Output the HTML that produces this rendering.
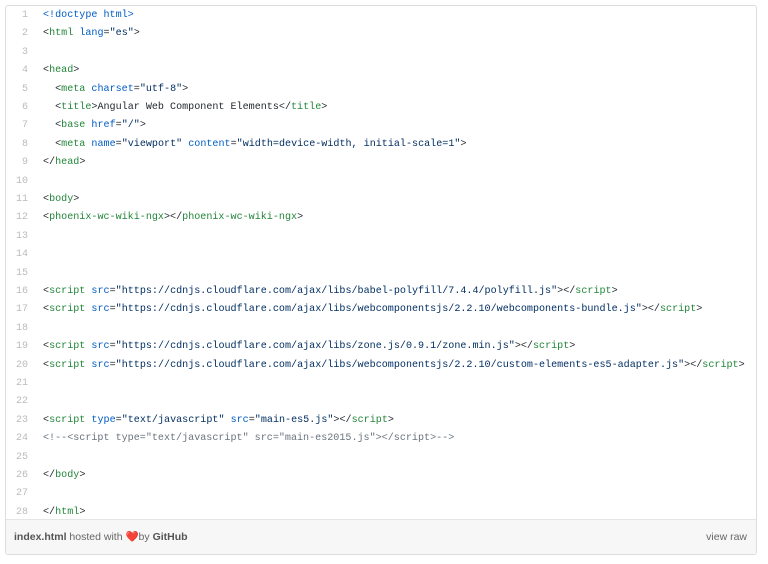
<!DOCTYPE html>
<html><head><style>
body{margin:0;background:#fff;width:768px;height:564px;overflow:hidden}
.box{position:absolute;left:5px;top:5px;width:752px;height:550px;border:1px solid #ddd;border-radius:3px;box-sizing:border-box;overflow:hidden}
.code{position:absolute;top:1px;left:0;right:0}
.l{position:absolute;height:18px;font:10.08px/18px "Liberation Mono",monospace;color:#24292e;white-space:pre}
.n{position:absolute;width:22px;text-align:right;left:0;font:10px/18px "Liberation Mono",monospace;color:#bbb}
.t{color:#22863a}.a{color:#005cc5}.s{color:#032f62}.c{color:#6a737d}
.foot{position:absolute;left:0;right:0;bottom:0;height:34px;background:#f7f7f7;border-top:1px solid #e5e5e5;font:10.5px/34px "Liberation Sans",sans-serif;color:#666}
.foot b{color:#555;font-weight:bold}
</style></head><body><div class="box"><div class="code" id="c"></div>
<div class="foot"><span style="position:absolute;left:8px"><b>index.html</b> hosted with <span style="color:#e33">&#10084;&#65039;</span>by <b>GitHub</b></span><span style="position:absolute;right:9px;color:#666">view raw</span></div></div>
<script>
var L=[
'<span class="a">&lt;!doctype html&gt;</span>',
'&lt;<span class="t">html</span> <span class="a">lang</span>=<span class="s">"es"</span>&gt;',
'',
'&lt;<span class="t">head</span>&gt;',
'  &lt;<span class="t">meta</span> <span class="a">charset</span>=<span class="s">"utf-8"</span>&gt;',
'  &lt;<span class="t">title</span>&gt;Angular Web Component Elements&lt;/<span class="t">title</span>&gt;',
'  &lt;<span class="t">base</span> <span class="a">href</span>=<span class="s">"/"</span>&gt;',
'  &lt;<span class="t">meta</span> <span class="a">name</span>=<span class="s">"viewport"</span> <span class="a">content</span>=<span class="s">"width=device-width, initial-scale=1"</span>&gt;',
'&lt;/<span class="t">head</span>&gt;',
'',
'&lt;<span class="t">body</span>&gt;',
'&lt;<span class="t">phoenix-wc-wiki-ngx</span>&gt;&lt;/<span class="t">phoenix-wc-wiki-ngx</span>&gt;',
'','','',
'&lt;<span class="t">script</span> <span class="a">src</span>=<span class="s">"https://cdnjs.cloudflare.com/ajax/libs/babel-polyfill/7.4.4/polyfill.js"</span>&gt;&lt;/<span class="t">script</span>&gt;',
'&lt;<span class="t">script</span> <span class="a">src</span>=<span class="s">"https://cdnjs.cloudflare.com/ajax/libs/webcomponentsjs/2.2.10/webcomponents-bundle.js"</span>&gt;&lt;/<span class="t">script</span>&gt;',
'',
'&lt;<span class="t">script</span> <span class="a">src</span>=<span class="s">"https://cdnjs.cloudflare.com/ajax/libs/zone.js/0.9.1/zone.min.js"</span>&gt;&lt;/<span class="t">script</span>&gt;',
'&lt;<span class="t">script</span> <span class="a">src</span>=<span class="s">"https://cdnjs.cloudflare.com/ajax/libs/webcomponentsjs/2.2.10/custom-elements-es5-adapter.js"</span>&gt;&lt;/<span class="t">script</span>&gt;',
'','',
'&lt;<span class="t">script</span> <span class="a">type</span>=<span class="s">"text/javascript"</span> <span class="a">src</span>=<span class="s">"main-es5.js"</span>&gt;&lt;/<span class="t">script</span>&gt;',
'<span class="c">&lt;!--&lt;script type="text/javascript" src="main-es2015.js"&gt;&lt;/script&gt;--&gt;</span>',
'',
'&lt;/<span class="t">body</span>&gt;',
'',
'&lt;/<span class="t">html</span>&gt;'];
var h='';for(var i=0;i<L.length;i++){var y=Math.round(i*18.4);h+='<div class="n" style="top:'+y+'px">'+(i+1)+'</div><div class="l" style="left:37px;top:'+y+'px">'+L[i]+'</div>';}
document.getElementById('c').innerHTML=h;
</script></body></html>
